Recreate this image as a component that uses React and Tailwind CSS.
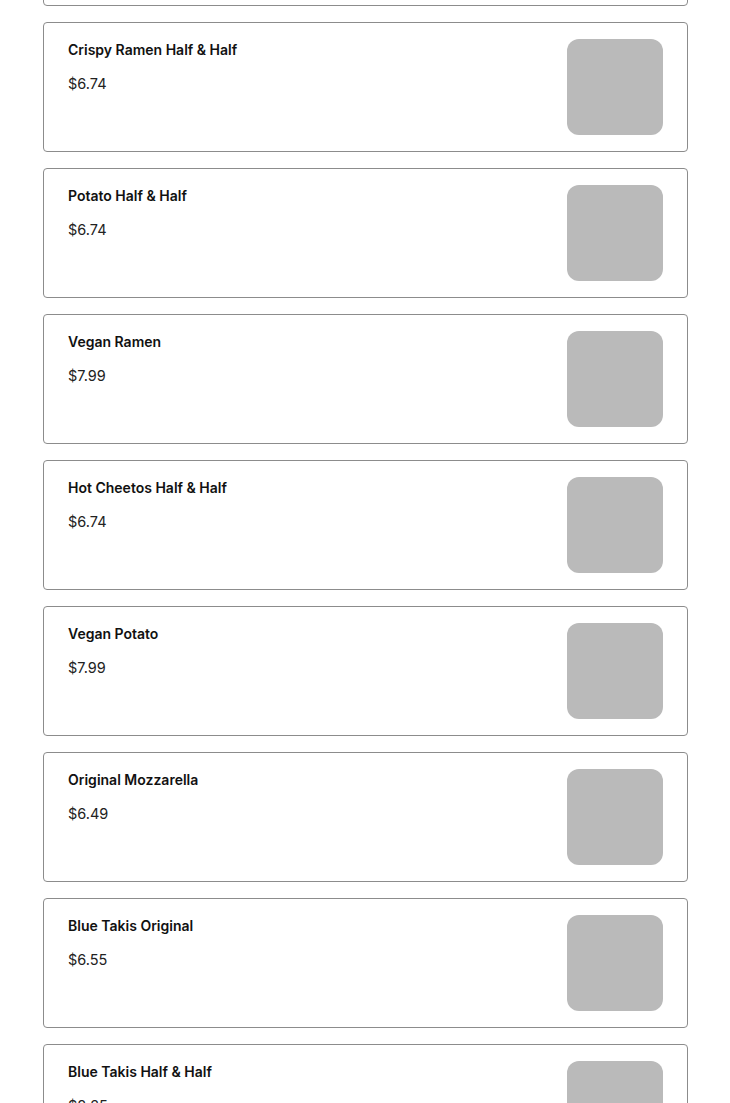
const ITEMS = [
  { name: "Classic Half & Half", price: "$6.74" },
  { name: "Crispy Ramen Half & Half", price: "$6.74" },
  { name: "Potato Half & Half", price: "$6.74" },
  { name: "Vegan Ramen", price: "$7.99" },
  { name: "Hot Cheetos Half & Half", price: "$6.74" },
  { name: "Vegan Potato", price: "$7.99" },
  { name: "Original Mozzarella", price: "$6.49" },
  { name: "Blue Takis Original", price: "$6.55" },
  { name: "Blue Takis Half & Half", price: "$8.25" },
];

function MenuCard({ item }) {
  return (
    <div className="flex justify-between rounded-[4px] border border-[#8c8c8c] bg-white px-6 py-4">
      <div className="flex flex-col gap-3">
        <h3 className="text-[14px] leading-[22px] font-semibold text-[#111]">{item.name}</h3>
        <p className="text-[14.5px] leading-[22px] text-[#222]">{item.price}</p>
      </div>
      <div className="h-24 w-24 shrink-0 rounded-xl bg-[#bababa]" />
    </div>
  );
}

export default function App() {
  return (
    <div className="h-[1103px] overflow-hidden bg-white font-['Inter',sans-serif]">
      <div className="ml-[43px] -mt-[124px] flex w-[645px] flex-col gap-4">
        {ITEMS.map((item) => (
          <MenuCard key={item.name} item={item} />
        ))}
      </div>
    </div>
  );
}
